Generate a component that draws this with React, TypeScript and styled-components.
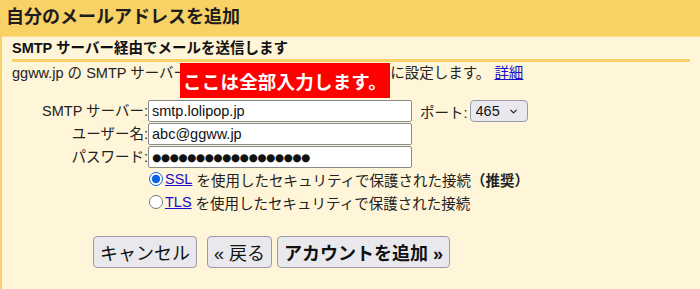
import { FunctionComponent } from "react";
import styled, { createGlobalStyle } from "styled-components";
import { ChevronDown } from "lucide-react";

const GlobalStyle = createGlobalStyle`
  html, body {
    margin: 0;
    padding: 0;
    background: #fff5d8;
  }
  body {
    font-family: "Liberation Sans", Arial, "Noto Sans CJK JP", sans-serif;
    color: #222;
  }
`;

const App: FunctionComponent = () => {
  return (
    <>
      <GlobalStyle />
      <Page>
        <Header>自分のメールアドレスを追加</Header>
        <Content>
          <SectionTitle>SMTP サーバー経由でメールを送信します</SectionTitle>
          <Description>
            ggww.jp の SMTP サーバーを使ってメールを送信するように設定します。<DetailLink href="#">詳細</DetailLink>
          </Description>

          <FormGrid>
            <FieldLabel>SMTP サーバー:</FieldLabel>
            <FieldCell>
              <TextInput type="text" defaultValue="smtp.lolipop.jp" />
              <PortLabel>ポート:</PortLabel>
              <SelectWrap>
                <PortSelect defaultValue="465">
                  <option value="465">465</option>
                  <option value="587">587</option>
                  <option value="25">25</option>
                </PortSelect>
                <Chevron>
                  <ChevronDown size={11} strokeWidth={2.6} />
                </Chevron>
              </SelectWrap>
            </FieldCell>

            <FieldLabel>ユーザー名:</FieldLabel>
            <FieldCell>
              <TextInput type="text" defaultValue="abc@ggww.jp" />
            </FieldCell>

            <FieldLabel>パスワード:</FieldLabel>
            <FieldCell>
              <TextInput type="text" $masked readOnly value={"●".repeat(18)} />
            </FieldCell>

            <Spacer />
            <RadioRow $first>
              <Radio type="radio" name="secure" defaultChecked />
              <Link href="#">SSL</Link>&nbsp;を使用したセキュリティで保護された接続
              <Strong>（推奨）</Strong>
            </RadioRow>

            <Spacer />
            <RadioRow>
              <Radio type="radio" name="secure" />
              <Link href="#">TLS</Link>&nbsp;を使用したセキュリティで保護された接続
            </RadioRow>
          </FormGrid>

          <ButtonRow>
            <Button>キャンセル</Button>
            <Button $gap={5}>« 戻る</Button>
            <Button $bold>アカウントを追加 »</Button>
          </ButtonRow>
        </Content>

        <Callout>ここは全部入力します。</Callout>
      </Page>
    </>
  );
};

export default App;

const Page = styled.div`
  position: relative;
  width: 700px;
  height: 289px;
  overflow: hidden;
  box-sizing: border-box;
  border-left: 2px solid #f9d266;
  background: #fff5d8;
`;

const Header = styled.div`
  height: 36px;
  line-height: 35px;
  padding-left: 4px;
  background: #f9d266;
  border-bottom: 1px solid #fbe08e;
  font-family: "Liberation Sans", "Noto Sans CJK JP", sans-serif;
  font-size: 18px;
  font-weight: 700;
  color: #1d1d1d;
`;

const Content = styled.div`
  padding: 0 10px;
  font-size: 14.5px;
`;

const SectionTitle = styled.div`
  height: 22px;
  line-height: 22px;
  font-weight: 700;
  font-size: 14.5px;
  color: #111;
  border-bottom: 3px solid #f9d266;
`;

const Description = styled.div`
  height: 22px;
  line-height: 22px;
  white-space: nowrap;
`;

const Link = styled.a`
  color: #1a0dcc;
  text-decoration: underline;
`;

const DetailLink = styled(Link)`
  margin-left: 4px;
`;

const FormGrid = styled.div`
  display: grid;
  grid-template-columns: 136px 1fr;
  grid-auto-rows: auto;
  row-gap: 1px;
  margin-top: 16px;
  align-items: center;
`;

const FieldLabel = styled.div`
  text-align: right;
  line-height: 22px;
  white-space: nowrap;
`;

const FieldCell = styled.div`
  display: flex;
  align-items: center;
  height: 22px;
`;

const TextInput = styled.input<{ $masked?: boolean }>`
  box-sizing: border-box;
  width: 264px;
  height: 22px;
  margin: 0;
  padding: 0 3px;
  border: 1px solid #8a8a8a;
  border-radius: 2px;
  background: #fff;
  font-family: ${({ $masked }) =>
    $masked ? `"DejaVu Sans", sans-serif` : `"Liberation Sans", Arial, sans-serif`};
  font-size: ${({ $masked }) => ($masked ? "10.5px" : "14.5px")};
  letter-spacing: ${({ $masked }) => ($masked ? "-0.4px" : "0")};
  color: #111;
  outline: none;
`;

const PortLabel = styled.span`
  margin: 0 2px 0 8px;
  white-space: nowrap;
`;

const SelectWrap = styled.span`
  position: relative;
  display: inline-flex;
`;

const PortSelect = styled.select`
  appearance: none;
  box-sizing: border-box;
  width: 58px;
  height: 22px;
  margin: 0;
  padding: 0 0 0 5px;
  border: 1px solid #9a9aa6;
  border-radius: 4px;
  background: #e9e9ed;
  font-family: "Liberation Sans", Arial, sans-serif;
  font-size: 14.5px;
  color: #111;
`;

const Chevron = styled.span`
  position: absolute;
  right: 9px;
  top: 6px;
  display: flex;
  pointer-events: none;
  color: #222;
`;

const Spacer = styled.div``;

const RadioRow = styled.div<{ $first?: boolean }>`
  display: flex;
  align-items: center;
  height: 22px;
  margin-top: ${({ $first }) => ($first ? "-1px" : "0")};
  white-space: nowrap;
`;

const Radio = styled.input`
  width: 14px;
  height: 14px;
  margin: 0 2px 0 1px;
  accent-color: #0b63e5;
`;

const Strong = styled.b`
  font-weight: 700;
`;

const ButtonRow = styled.div`
  display: flex;
  margin: 23px 0 0 81px;
`;

const Button = styled.button<{ $bold?: boolean; $gap?: number }>`
  box-sizing: border-box;
  height: 32px;
  margin: 0 ${({ $gap }) => $gap ?? 10}px 0 0;
  padding: 0 6px;
  border: 1px solid #9a9aa6;
  border-radius: 4px;
  background: #e9e9ed;
  font-family: "Liberation Sans", Arial, "Noto Sans CJK JP", sans-serif;
  font-size: 18px;
  font-weight: ${({ $bold }) => ($bold ? 700 : 400)};
  color: #111;
  white-space: nowrap;
`;

const Callout = styled.div`
  position: absolute;
  left: 178px;
  top: 63px;
  width: 210px;
  height: 35px;
  display: flex;
  align-items: center;
  justify-content: center;
  background: #ff0000;
  color: #fff;
  font-family: "Noto Sans CJK JP", sans-serif;
  font-size: 18.5px;
  font-weight: 700;
  letter-spacing: 0.2px;
`;
